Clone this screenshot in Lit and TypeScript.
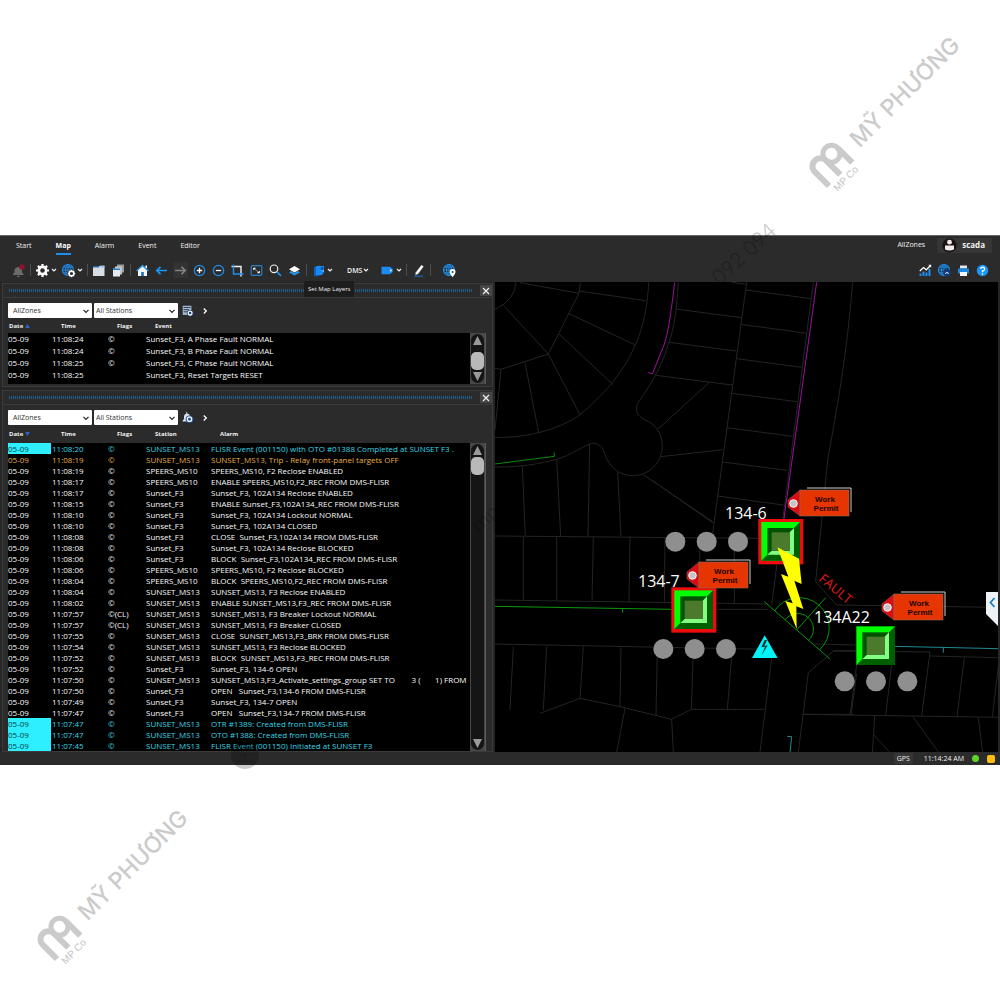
import { LitElement, html, svg, css } from "lit";
import { customElement, property } from "lit/decorators.js";
import { classMap } from "lit/directives/class-map.js";

type Row = { date: string; time: string; flags: string; cells: string[]; tone?: string };

const BLUE = "#1e90f0";

const chevron = svg`<path d="M1 2 3 4 5 2" fill="none" stroke="#f2f2f2" stroke-width="1.2"/>`;

const globe = (color: string) => svg`
  <circle cx="7" cy="7" r="5.5" fill="none" stroke=${color} stroke-width="1.2"/>
  <ellipse cx="7" cy="7" rx="2.4" ry="5.5" fill="none" stroke=${color}/>
  <path d="M1.5 7H12.5M2.4 4.2H11.6M2.4 9.8H11.6M7 1.5V12.5" stroke=${color} fill="none"/>`;

const gear = svg`
  <circle cx="7.5" cy="7.5" r="3.6" fill="none" stroke="#fff" stroke-width="2.6"/>
  <path d="M7.5 1V3.4M7.5 11.600V14M1 7.5H3.400M11.600 7.5H14M2.900 2.900 4.600 4.600M10.400 10.400 12.100 12.100M12.100 2.900 10.400 4.600M4.600 10.400 2.900 12.100" stroke="#fff" stroke-width="2.200"/>`;

const ICONS: Record<string, unknown> = {
  bell: svg`<path d="M2 12V11L3.500 9.500V6.500A4 4 0 0 1 11 6.500V9.500L12.500 11V12ZM6 12.800H9A1.500 1.500 0 0 1 6 12.800Z" fill="#6a6a6a"/><circle cx="11" cy="4" r="2.800" fill="#8a1430"/>`,
  gear,
  globeGear: svg`${globe(BLUE)}<circle cx="10.500" cy="10.500" r="4.200" fill="#2b2b2b"/><circle cx="10.500" cy="10.500" r="2.400" fill="none" stroke="#fff" stroke-width="1.600"/><path d="M10.500 6.800V8M10.500 13V14.200M6.800 10.500H8M13 10.500H14.200M7.900 7.900 8.800 8.800M12.200 12.200 13.100 13.100M13.100 7.900 12.200 8.800M8.800 12.200 7.900 13.100" stroke="#fff" stroke-width="1.100"/>`,
  win: svg`<path d="M1 3H12.500V13H1Z" fill="#d8dee4"/><path d="M1 3H7V4.500H1Z" fill="#1f6fb0"/><path d="M7 4.500H12.500V2.500H8.500Z" fill="#9fc4e4"/>`,
  wins: svg`<path d="M6 1.500H13V9.500H6Z" fill="#9b9b9b"/><path d="M4 3.500H11V11.500H4Z" fill="#c4c8cc"/><path d="M2 5.500H9V13.500H2Z" fill="#e4ebf2"/><path d="M2 5.500H9V7H2Z" fill="#1f7fd0"/>`,
  home: svg`<path d="M3 7V13H12V7L7.500 3Z" fill="#f4f8fc"/><path d="M1.500 8 7.500 2.500 13.500 8" fill="none" stroke="#2b8de0" stroke-width="1.400"/><path d="M6.200 13V9H8.800V13Z" fill="#1272c4"/><path d="M10.500 2.500H12V5H10.500Z" fill="#fff"/>`,
  left: svg`<path d="M13 7.500H3M6.500 3.800 2.800 7.500 6.500 11.200" fill="none" stroke="#1c97f5" stroke-width="1.700"/>`,
  right: svg`<path d="M2 7.500H12M8.500 3.800 12.200 7.500 8.500 11.200" fill="none" stroke="#858585" stroke-width="1.600"/>`,
  plus: svg`<circle cx="7.500" cy="7.500" r="5.200" fill="none" stroke=${BLUE} stroke-width="1.200"/><path d="M4.800 7.500H10.200M7.500 4.800V10.200" stroke="#fff" stroke-width="1.300"/>`,
  minus: svg`<circle cx="7.500" cy="7.500" r="5.200" fill="none" stroke=${BLUE} stroke-width="1.200"/><path d="M4.800 7.500H10.200" stroke="#fff" stroke-width="1.300"/>`,
  crop: svg`<path d="M1.500 3.500H11V13.500" fill="none" stroke="#f4f4f4" stroke-width="1.400"/><path d="M3.500 1.500V11H13.500" fill="none" stroke=${BLUE} stroke-width="1.400"/>`,
  fit: svg`<rect x="2.200" y="2.700" width="10.600" height="9.600" rx="1" fill="none" stroke="#2a7fc4" stroke-width="1.200"/><path d="M4.500 5H6.500L4.500 7ZM10.500 10H8.500L10.500 8Z" fill="#fff" stroke="#fff" stroke-width=".6"/><path d="M6 6.500 9 8.700" stroke="#aaa" stroke-width=".8"/>`,
  search: svg`<circle cx="6" cy="5.800" r="3.800" fill="none" stroke="#f0f0f0" stroke-width="1.200"/><path d="M9 8.800 13 12.800" stroke=${BLUE} stroke-width="1.800"/>`,
  layers: svg`<path d="M2 9.500 7.500 12.600 13 9.500 11 8 7.500 10 4 8Z" fill="#1f93ee"/><path d="M2 6.200 7.500 3 13 6.200 7.500 9.400Z" fill="#fff"/>`,
  doc: svg`<path d="M3 4 9 2.500V12.500L4.500 13.500 3 12.500Z" fill="#0f62c0"/><path d="M5 3H13V9L11 12H5Z" fill="#168af2"/><circle cx="11" cy="5.500" r="1.400" fill="#0c4a94"/><path d="M9.500 7.500H13V9Z" fill="#6db8ff"/>`,
  tag: svg`<path d="M1.500 3.800H10L12.800 6V9L10 11.200H1.500Z" fill="#1b8df2"/><circle cx="10.800" cy="7.500" r="1" fill="#dff0ff"/>`,
  pencil: svg`<path d="M10.500 2 12.600 3.500 7 11 4.400 12 4.700 9.500Z" fill="#f6f6f6"/><path d="M3 13.200H12" stroke="#1b66a8" stroke-width="1.300"/>`,
  globePin: svg`${globe(BLUE)}<path d="M10.600 6A2.900 2.900 0 0 1 13.500 9C13.500 10.700 11.600 12.600 10.600 14.200 9.600 12.600 7.700 10.700 7.700 9A2.900 2.900 0 0 1 10.600 6Z" fill="#fff"/><circle cx="10.600" cy="8.900" r="1" fill="#1c4468"/>`,
  chart: svg`<path d="M2.500 13V10.500M5.500 13V8.500M8.500 13V9.500M11.500 13V6" stroke=${BLUE} stroke-width="2"/><path d="M1.800 8 5.500 4.500 8.300 6.800 12.500 2.500" fill="none" stroke="#fff" stroke-width="1.300"/><path d="M10.300 1.800H13.200V4.700Z" fill="#fff"/>`,
  globeLink: svg`${globe(BLUE)}<circle cx="10" cy="9.600" r="3.800" fill="#123a78"/><path d="M8.200 10.500Q10 8.500 11.800 10.500" fill="none" stroke="#fff"/>`,
  print: svg`<path d="M4 2.500H11V5.500H4Z" fill="#dfe9f2"/><path d="M2 5.500H13V10.500H2Z" fill="#1d88e2"/><path d="M4 9H11V13H4Z" fill="#f4f4f4"/>`,
  help: svg`<circle cx="7.500" cy="7.500" r="5.700" fill="#1b96f8"/><path d="M5.700 6A1.900 1.900 0 1 1 7.500 8V9.200" fill="none" stroke="#fff" stroke-width="1.300"/><circle cx="7.500" cy="11" r=".8" fill="#fff"/>`,
  listGear: svg`<path d="M2 2H12V12.500H2Z" fill="#a9bcd6"/><path d="M3 4H11M3 6.500H9M3 9H7" stroke="#26364e" stroke-width="1.100"/><circle cx="10.500" cy="10.500" r="3.800" fill="#28456c"/><circle cx="10.500" cy="10.500" r="2.200" fill="none" stroke="#e9f2ff" stroke-width="1.500"/>`,
  bellGear: svg`<path d="M1.500 12 3.500 9V6A3.500 3.500 0 0 1 10 4.500V12Z" fill="#dbe4ee"/><path d="M6.500 1V3" stroke="#dbe4ee"/><circle cx="9.800" cy="9.500" r="4.400" fill="#1f4f88"/><circle cx="9.800" cy="9.500" r="2.500" fill="none" stroke="#e9f2ff" stroke-width="1.600"/>`,
};

const icon = (name: string) =>
  html`<svg class="icon" viewBox="0 0 15 15" aria-hidden="true">${ICONS[name]}</svg>`;

const EVENTS: Row[] = [
  { date: "05-09", time: "11:08:24", flags: "©", cells: ["Sunset_F3, A Phase Fault NORMAL"] },
  { date: "05-09", time: "11:08:24", flags: "©", cells: ["Sunset_F3, B Phase Fault NORMAL"] },
  { date: "05-09", time: "11:08:25", flags: "©", cells: ["Sunset_F3, C Phase Fault NORMAL"] },
  { date: "05-09", time: "11:08:25", flags: "", cells: ["Sunset_F3, Reset Targets RESET"] },
];

const alarm = (time: string, station: string, text: string, tone = "", flags = "©"): Row => ({
  date: "05-09", time, flags, cells: [station, text], tone,
});
const MS13 = "SUNSET_MS13";
const MS10 = "SPEERS_MS10";
const F3 = "Sunset_F3";

const ALARMS: Row[] = [
  alarm("11:08:20", MS13, "FLISR Event (001150) with OTO #01388 Completed at SUNSET F3 .", "cyan"),
  alarm("11:08:19", MS13, "SUNSET_MS13, Trip - Relay front-panel targets OFF", "amber"),
  alarm("11:08:19", MS10, "SPEERS_MS10, F2 Reclose ENABLED"),
  alarm("11:08:17", MS10, "ENABLE SPEERS_MS10,F2_REC FROM DMS-FLISR"),
  alarm("11:08:17", F3, "Sunset_F3, 102A134 Reclose ENABLED"),
  alarm("11:08:15", F3, "ENABLE Sunset_F3,102A134_REC FROM DMS-FLISR"),
  alarm("11:08:10", F3, "Sunset_F3, 102A134 Lockout NORMAL"),
  alarm("11:08:10", F3, "Sunset_F3, 102A134 CLOSED"),
  alarm("11:08:08", F3, "CLOSE  Sunset_F3,102A134 FROM DMS-FLISR"),
  alarm("11:08:08", F3, "Sunset_F3, 102A134 Reclose BLOCKED"),
  alarm("11:08:06", F3, "BLOCK  Sunset_F3,102A134_REC FROM DMS-FLISR"),
  alarm("11:08:06", MS10, "SPEERS_MS10, F2 Reclose BLOCKED"),
  alarm("11:08:04", MS10, "BLOCK  SPEERS_MS10,F2_REC FROM DMS-FLISR"),
  alarm("11:08:04", MS13, "SUNSET_MS13, F3 Reclose ENABLED"),
  alarm("11:08:02", MS13, "ENABLE SUNSET_MS13,F3_REC FROM DMS-FLISR"),
  alarm("11:07:57", MS13, "SUNSET_MS13, F3 Breaker Lockout NORMAL", "", "©(CL)"),
  alarm("11:07:57", MS13, "SUNSET_MS13, F3 Breaker CLOSED", "", "©(CL)"),
  alarm("11:07:55", MS13, "CLOSE  SUNSET_MS13,F3_BRK FROM DMS-FLISR"),
  alarm("11:07:54", MS13, "SUNSET_MS13, F3 Reclose BLOCKED"),
  alarm("11:07:52", MS13, "BLOCK  SUNSET_MS13,F3_REC FROM DMS-FLISR"),
  alarm("11:07:52", F3, "Sunset_F3, 134-6 OPEN"),
  alarm("11:07:50", MS13, "SUNSET_MS13,F3_Activate_settings_group SET TO        3 (       1) FROM"),
  alarm("11:07:50", F3, "OPEN   Sunset_F3,134-6 FROM DMS-FLISR"),
  alarm("11:07:49", F3, "Sunset_F3, 134-7 OPEN"),
  alarm("11:07:47", F3, "OPEN   Sunset_F3,134-7 FROM DMS-FLISR"),
  alarm("11:07:47", MS13, "OTR #1389: Created from DMS-FLISR", "cyan"),
  alarm("11:07:47", MS13, "OTO #1388: Created from DMS-FLISR", "cyan"),
  alarm("11:07:45", MS13, "FLISR Event (001150) Initiated at SUNSET F3", "cyan"),
];

@customElement("log-panel")
class LogPanel extends LitElement {
  @property() name = "";
  @property() glyph = "";
  @property() sort = "up";
  @property({ type: Array }) columns: string[] = [];
  @property({ type: Array }) rows: Row[] = [];
  @property({ type: Boolean, reflect: true }) dense = false;

  static styles = css`
    :host { display: flex; flex-direction: column; border: 1px solid #3b3b3b; background: #2b2b2b; }
    button { border: 0; padding: 0; background: none; color: inherit; font: inherit; display: grid; place-items: center; }
    .title { display: flex; align-items: center; gap: 8px; height: 13px; padding-left: 6px; border-bottom: 1px solid #3b3b3b; }
    .grip { flex: 1; height: 3px; background: linear-gradient(90deg, #1f5b88 1px, transparent 1px) 0 0 / 2px 3px; }
    .close { width: 12px; height: 11px; background: #454545; }
    .filters { display: flex; align-items: center; gap: 2px; padding: 5px 5px 0; }
    .pick { display: grid; width: 84px; height: 15px; }
    .pick select, .pick svg { grid-area: 1 / 1; }
    .pick select { appearance: none; width: 100%; border: 0; border-radius: 1px; background: #fff; color: #333; font: inherit; font-size: 7px; line-height: 15px; padding: 0 0 0 5px; }
    .pick + .pick select { padding-left: 2px; }
    .pick svg { width: 8px; height: 8px; place-self: center end; margin-right: 2px; pointer-events: none; }
    .config { width: 15px; height: 15px; }
    .more { width: 15px; height: 15px; }
    .icon { width: 13px; height: 13px; display: block; }
    .list { display: grid; grid-template-columns: minmax(0, 1fr) 16px; margin: 0 6px 2px 5px; }
    :host([dense]) .list { margin-bottom: 0; }
    .body { background: #000; padding-bottom: 3px; }
    :host([dense]) .body { padding-bottom: 0; }
    table { width: 100%; table-layout: fixed; border-collapse: collapse; }
    th { box-sizing: border-box; height: 15px; padding: 0 0 0 9px; background: #2b2b2b; color: #f0f0f0; text-align: left; font-size: 6px; line-height: 12px; font-weight: 700; white-space: nowrap; }
    th:first-child { padding-left: 1px; }
    .date { width: 44px; }
    .time { width: 56px; }
    .flags { width: 38px; }
    .station { width: 65px; }
    :host([dense]) th { height: 18px; }
    th svg { width: 5px; height: 4px; margin-left: 2px; }
    td { height: 12px; padding: 0; line-height: 12px; font-size: 8px; color: #fafafa; white-space: pre; overflow: hidden; }
    :host([dense]) td { height: 11px; line-height: 11px; }
    .cyan td { color: #38d6e6; }
    .cyan td:first-child { color: #0a4048; background: linear-gradient(#2eefff, #2eefff) 0 0 / 43px 100% no-repeat; }
    .amber td { color: #e6ae46; }
    .rail { margin-top: 15px; background: #484848; border-right: 1px solid #5a5a5a; padding: 1px; display: grid; }
    :host([dense]) .rail { margin-top: 18px; }
    .track { border-radius: 7px; background: #151515; display: flex; flex-direction: column; align-items: center; }
    .track svg { width: 9px; height: 9px; margin: 2px 0; }
    .gap { flex: 1; }
    .thumb { width: 13px; height: 18px; border-radius: 5px; background: #b9b9b9; }
  `;

  private cellClass(i: number) {
    return this.columns.length > 4 && i === 3 ? "station" : ["date", "time", "flags"][i] ?? "text";
  }

  render() {
    return html`
      <div class="title">
        <div class="grip"></div>
        <button class="close" aria-label="Close">
          <svg width="8" height="8" viewBox="0 0 8 8"><path d="M1 1 7 7M7 1 1 7" stroke="#f4f4f4" stroke-width="1.200"/></svg>
        </button>
      </div>
      <div class="filters">
        ${["AllZones", "All Stations"].map((v) => html`
          <label class="pick">
            <select aria-label=${`${this.name} ${v}`}><option>${v}</option></select>
            <svg viewBox="0 0 8 8"><path d="M1.500 2.800 4 5.300 6.500 2.800" fill="none" stroke="#222" stroke-width="1.200"/></svg>
          </label>`)}
        <button class="config" aria-label="Configure list">${icon(this.glyph)}</button>
        <button class="more" aria-label="More filters">
          <svg width="8" height="8" viewBox="0 0 8 8"><path d="M2.800 1.500 5.300 4 2.800 6.500" fill="none" stroke="#fff" stroke-width="1.300"/></svg>
        </button>
      </div>
      <div class="list">
        <div class="body">
          <table>
            <thead><tr>
              ${this.columns.map((c, i) => html`<th class=${this.cellClass(i)}>${c}${i === 0 ? html`<svg viewBox="0 0 5 4"><path d=${this.sort === "up" ? "M2.500 0 5 4H0Z" : "M2.500 4 5 0H0Z"} fill="#2f62c4"/></svg>` : ""}</th>`)}
            </tr></thead>
            <tbody>
              ${this.rows.map((r) => html`<tr class=${r.tone ?? ""}><td>${r.date}</td><td>${r.time}</td><td>${r.flags}</td>${r.cells.map((c) => html`<td>${c}</td>`)}</tr>`)}
            </tbody>
          </table>
        </div>
        <div class="rail"><div class="track">
          <svg viewBox="0 0 9 9"><path d="M4.500 0 9 9H0Z" fill="#9a9a9a"/></svg>
          ${this.dense ? "" : html`<div class="gap"></div>`}
          <div class="thumb"></div>
          ${this.dense ? html`<div class="gap"></div>` : ""}
          <svg viewBox="0 0 9 9"><path d="M4.500 9 9 0H0Z" fill="#9a9a9a"/></svg>
        </div></div>
      </div>`;
  }
}

const breaker = (x: number, y: number, alert: boolean) => svg`
  <g transform="translate(${x} ${y})">
    ${alert ? svg`<rect x="-9" y="-9" width="135" height="136" fill="#ee0c0c"/>` : ""}
    <rect width="116" height="116" fill="#00ff00"/>
    <path d="M116 0V116H0L18 98H98V18Z" fill="#006000"/>
    <rect x="18" y="18" width="80" height="80" fill="#005200"/>
    <path d="M98 18V98H18L31 86H85V31Z" fill="#82ff82"/>
    <rect x="31" y="31" width="55" height="55" fill="#4c7a2c"/>
  </g>`;

const permit = (x: number, y: number) => svg`
  <g transform="translate(${x} ${y})">
    <path d="M19 2H63V26" fill="none" stroke="#cfcfcf"/>
    <path d="M12 4 0 14V21L12 30Z" fill="#de0a12" stroke="#7c5a50" stroke-width=".6"/>
    <rect x="12" y="4" width="49" height="26" fill="#e63500" stroke="#8c6a5c" stroke-width=".6"/>
    <circle cx="5.500" cy="17.500" r="3.800" fill="#c4c4c4" stroke="#fff" stroke-width="1"/>
    <text class="permit" x="37" y="16">Work</text>
    <text class="permit" x="38" y="25">Permit</text>
  </g>`;

const dots = (x: number, y: number) =>
  [0, 1, 2].map((i) => svg`<circle cx=${x + i * 94} cy=${y} r="30" fill="#8f8f8f"/>`);

@customElement("feeder-map")
class FeederMap extends LitElement {
  static styles = css`
    :host { display: block; position: relative; background: #000; border-right: 2px solid #262626; overflow: hidden; }
    .canvas { position: absolute; inset: 0; width: 100%; height: 100%; }
    .parcels { fill: none; stroke: #242424; stroke-width: 3; }
    .line { fill: none; stroke-width: 3; }
    .permit { font: 700 8px "Liberation Sans", sans-serif; fill: #1a0800; text-anchor: middle; }
    .label { font: 16px "Open Sans", "Noto Sans", sans-serif; fill: #fff; }
    .fault { font: 13px "Open Sans", "Noto Sans", sans-serif; fill: #e01818; }
    .drawer { position: absolute; right: 0; top: 66%; width: 12px; height: 34px; padding: 0; border: 0; background: none; }
    .drawer svg { display: block; }
  `;

  render() {
    return html`
      <svg class="canvas" viewBox="495 282 503 470" preserveAspectRatio="xMidYMid slice" role="img" aria-label="Feeder map">
        <g class="parcels">
          <path transform="translate(495 280) scale(.33333)" d="M0 88Q60 60 63 8M75 8 252 40M256 8 252 40 160 222 18 268 0 265M252 33 452 62M222 101 423 196M192 162 355 315M160 222 255 404M25 76 160 222M90 248 131 458M18 268 0 450M461 8C455 120 430 260 255 404 190 450 90 475 0 472M550 8C545 90 538 145 519 195 505 245 483 290 435 360 415 385 425 408 450 420 480 430 502 460 502 498 502 550 460 587 413 587 370 587 345 560 330 525 325 500 310 488 290 490 275 492 220 530 185 538 140 550 80 562 0 561M541 87 739 113M522 187 724 213M483 286 712 315M643 307 488 448M497 530 683 509M443 583 653 725M185 538 197 768M82 558 91 768M284 492 279 768M368 577 378 768"/>
          <path transform="translate(700 230) scale(.33333)" d="M140 157 38 910M95 157 140 163M138 180 333 206M124 283 320 310M110 386 305 412M96 490 291 515M81 593 277 619M67 696 262 721M340 157 215 1125M458 157C440 380 410 540 383 690L347 1055"/>
          <path transform="translate(620 480) scale(.33333)" d="M-375 168 415 175M95 0 278 128M292 48 490 75M587 305 650 375M30 170 27 365M135 173 133 368M240 175 238 370M343 190 343 370M-375 360 445 372M290 388 445 388M-375 492 440 508 450 500M3 502 0 680M112 505 108 705M220 505 214 688 155 718 0 680-120 655-240 700M337 505 322 688M214 688H433M455 535 420 816M15 685-10 816M155 718 160 816M580 492 710 495M710 512H642L565 578 535 816M550 703H700M710 580 693 705M-80 170-84 362M-190 170-190 362M-290 170-290 362M-110 500-120 655M-220 500-230 690M-320 500-330 690"/>
          <path transform="translate(780 480) scale(.33333)" d="M167 375 655 382M160 513 450 516 425 708M450 528 655 533M553 533 531 710M655 560 637 712M230 553 211 703M335 553 317 706M68 703 655 712M284 708 277 818M282 765 328 816M400 712 475 816M595 714 608 816"/>
        </g>
        <g class="line" transform="translate(495 280) scale(.33333)">
          <path d="M539 8C530 80 522 150 508 192L472 282 460 277" stroke="#a010a0"/>
          <path d="M0 552 178 529 177 517" stroke="#0c8a0c"/>
        </g>
        <path class="line" transform="translate(700 230) scale(.33333)" d="M350 157 250 880" stroke="#a010a0"/>
        <g transform="translate(620 480) scale(.33333)">
          <path class="line" d="M-375 379 155 388M8 386V398" stroke="#0c9a0c"/>
          <path class="line" d="M433 365 630 537M530 450 617 353M463 393A90 90 0 1 1 598 510M495 420A47 47 0 1 1 565 482" stroke="#0b940b"/>
          ${breaker(424, 126, true)}${breaker(163, 331, true)}
          ${dots(166, 185)}${dots(130, 507)}
          <path d="M434 466 473 534H396Z" fill="#00f4f8"/>
          <path d="M434 480 424 502 435 500 425 526 443 496 433 498 441 480Z" fill="#003038"/>
          <path d="M472 202 537 236 545 312 523 302 550 387 529 379 530 447 496 363 518 370 483 282 505 290Z" fill="#ffff00"/>
        </g>
        <g transform="translate(780 480) scale(.33333)">
          <path class="line" d="M343 499 655 506M490 502V518M22 769 35 770 30 818" stroke="#1f8c94"/>
          ${breaker(229, 439, false)}${dots(194, 604)}
        </g>
        ${permit(788, 486)}${permit(687, 558)}${permit(882, 590)}
        <text class="label" x="725" y="519">134-6</text>
        <text class="label" x="638" y="587">134-7</text>
        <text class="label" x="814" y="623">134A22</text>
        <text class="fault" transform="translate(818 580) rotate(40)">FAULT</text>
      </svg>
      <button class="drawer" aria-label="Open side drawer">
        <svg width="12" height="34" viewBox="0 0 12 34"><path d="M0 0H12V34L0 22Z" fill="#eef2f4"/><path d="M8.500 6 4.500 10.500 8.500 15" fill="none" stroke="#1c7fc0" stroke-width="1.800"/></svg>
      </button>`;
  }
}

@customElement("app-root")
class AppRoot extends LitElement {
  static styles = css`
    :host { display: block; font-family: "Open Sans", "Noto Sans", sans-serif; font-size: 7px; color: #f0f0f0; }
    button { border: 0; padding: 0; background: none; color: inherit; font: inherit; }
    .page { position: relative; min-height: 100vh; display: flex; flex-direction: column; justify-content: center; background: #fff; overflow: hidden; }
    .window { background: #2b2b2b; border-top: 1px solid #686868; }
    .topbar { display: flex; align-items: center; justify-content: space-between; height: 22px; padding: 0 8px 0 16px; }
    .tabs { display: flex; gap: 24px; align-items: center; }
    .tab { color: inherit; text-decoration: none; line-height: 14px; border-bottom: 2px solid transparent; }
    .current { font-weight: 700; color: #fff; border-color: #1c90ee; }
    .account { display: flex; align-items: center; gap: 12px; margin-bottom: 4px; line-height: 14px; }
    .user { display: flex; align-items: center; gap: 5px; padding: 0 7px 0 5px; background: #363636; font-size: 8px; font-weight: 700; border-radius: 1px; }
    .avatar { width: 15px; height: 15px; display: block; }
    .toolbar { display: flex; align-items: center; justify-content: space-between; height: 24px; padding: 0 10px 0 11px; }
    .tools { display: flex; align-items: center; gap: 4px; }
    .tool { position: relative; display: flex; align-items: center; gap: 1px; height: 16px; }
    .off { background: #333; }
    .icon { width: 15px; height: 15px; display: block; }
    .chev { width: 6px; height: 6px; display: block; }
    .sep { width: 1px; height: 12px; background: #4e4e4e; }
    .dms { margin-left: 10px; font-weight: 600; }
    .spaced { margin-left: 7px; }
    .tip { position: absolute; left: 17px; top: 19px; z-index: 2; padding: 0 4px; font-size: 6px; line-height: 16px; white-space: nowrap; background: #1d1d1d; color: #f2f2f2; }
    .main { display: grid; grid-template-columns: minmax(0, 99fr) minmax(0, 101fr); }
    .side { display: flex; flex-direction: column; gap: 3px; padding: 1px 2px 0; background: #262626; }
    .status { display: flex; align-items: center; justify-content: flex-end; gap: 8px; height: 13px; padding-right: 5px; }
    .gps { padding: 0 3px; background: #363636; margin-right: 3px; line-height: 11px; }
    .ok { width: 7px; height: 7px; border-radius: 50%; background: #5fd42a; }
    .warn { width: 8px; height: 8px; border-radius: 2px; background: #ffbe12; }
    .marks { position: absolute; inset: 0; width: 100%; height: 100%; pointer-events: none; z-index: 1; }
    .brand { font: 500 23px Inter, "Open Sans", sans-serif; fill: #cbcbcb; }
    .co { font: 10px "Liberation Sans", sans-serif; fill: #c4c4c4; }
    .phone { font: 21px Lato, sans-serif; fill: #000; fill-opacity: .2; }
  `;

  private tool(name: string, label: string, opts: { menu?: boolean; cls?: string; tip?: string } = {}) {
    return html`<button class=${classMap({ tool: true, [opts.cls ?? "plain"]: true })} aria-label=${label}>
      ${icon(name)}${opts.menu ? html`<svg class="chev" viewBox="0 0 6 6">${chevron}</svg>` : ""}${opts.tip ? html`<span class="tip" role="tooltip">${opts.tip}</span>` : ""}
    </button>`;
  }

  private brand(x: number, y: number) {
    return svg`<g transform="translate(${x} ${y}) rotate(-45)">
      <path d="M0 0V-20A8 8 0 0 1 16 -20V0M33 0V-21" fill="none" stroke="#cbcbcb" stroke-width="6"/>
      <circle cx="24.500" cy="-21" r="8.500" fill="none" stroke="#cbcbcb" stroke-width="5"/>
      <text class="brand" x="48" y="-5">MỸ PHƯƠNG</text>
      <text class="co" x="2" y="10">MP Co</text>
    </g>`;
  }

  render() {
    const sep = html`<span class="sep"></span>`;
    return html`
      <div class="page">
        <div class="window">
          <header>
            <div class="topbar">
              <nav class="tabs">
                ${["Start", "Map", "Alarm", "Event", "Editor"].map((t) => html`<a href="#" class=${classMap({ tab: true, current: t === "Map" })}>${t}</a>`)}
              </nav>
              <div class="account">
                <span>AllZones</span>
                <button class="user">
                  <svg class="avatar" viewBox="0 0 15 15"><circle cx="7.500" cy="7.500" r="7.200" fill="#161616"/><circle cx="7.500" cy="4.200" r="2.400" fill="#f4e8e8"/><path d="M3 7.500H12V11.500Q7.500 13.500 3 11.500Z" fill="#f4e8e8"/></svg>
                  scada
                </button>
              </div>
            </div>
            <div class="toolbar">
              <div class="tools">
                ${this.tool("bell", "Silence alarms")}${sep}
                ${this.tool("gear", "Settings", { menu: true })}
                ${this.tool("globeGear", "Map settings", { menu: true })}${sep}
                ${this.tool("win", "New window")}${this.tool("wins", "Windows")}${sep}
                ${this.tool("home", "Home")}${this.tool("left", "Back")}${this.tool("right", "Forward", { cls: "off" })}
                ${this.tool("plus", "Zoom in")}${this.tool("minus", "Zoom out")}${this.tool("crop", "Zoom to area")}
                ${this.tool("fit", "Fit")}${this.tool("search", "Search")}
                ${this.tool("layers", "Set Map Layers", { tip: "Set Map Layers" })}${sep}
                ${this.tool("doc", "Notes", { menu: true })}
                <button class="tool dms">DMS<svg class="chev" viewBox="0 0 6 6">${chevron}</svg></button>
                ${this.tool("tag", "Tags", { menu: true, cls: "spaced" })}${sep}
                ${this.tool("pencil", "Edit")}${sep}
                ${this.tool("globePin", "Locate", { cls: "spaced" })}
              </div>
              <div class="tools">
                ${this.tool("chart", "Trends")}${this.tool("globeLink", "Connection")}${this.tool("print", "Print")}${this.tool("help", "Help")}
              </div>
            </div>
          </header>
          <main class="main">
            <div class="side">
              <log-panel name="Events" glyph="listGear" sort="up" .columns=${["Date", "Time", "Flags", "Event"]} .rows=${EVENTS}></log-panel>
              <log-panel dense name="Alarms" glyph="bellGear" sort="down" .columns=${["Date", "Time", "Flags", "Station", "Alarm"]} .rows=${ALARMS}></log-panel>
            </div>
            <feeder-map></feeder-map>
          </main>
          <footer class="status">
            <span class="gps">GPS</span><span>11:14:24 AM</span><span class="ok"></span><span class="warn"></span>
          </footer>
        </div>
        <svg class="marks" viewBox="0 0 1000 1000" aria-hidden="true">
          ${this.brand(829, 186)}${this.brand(57, 959)}
          <text class="phone" transform="translate(720 286) rotate(-43)">092 094</text>
          <text class="phone" transform="translate(479 533) rotate(-43)">mp</text>
          <circle cx="245" cy="755" r="14" fill="#000" fill-opacity=".2"/>
          <path d="M235 755H255M245 745V765M237 749H253M237 761H253" stroke="#000" stroke-opacity=".1"/>
        </svg>
      </div>`;
  }
}
